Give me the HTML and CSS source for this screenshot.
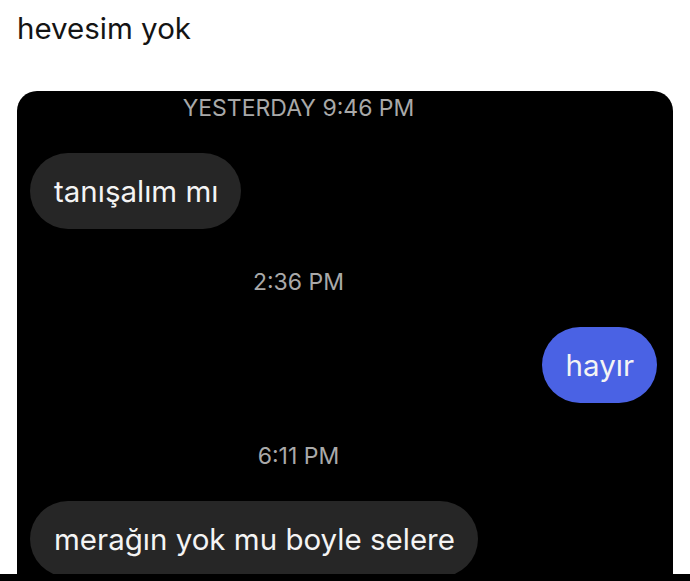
FILE: index.html
```html
<!DOCTYPE html>
<html lang="tr">
<head>
<meta charset="utf-8">
<title>hevesim yok</title>
<link rel="stylesheet" href="styles.css">
</head>
<body>
<div class="page">
  <h1 class="title">hevesim yok</h1>
  <div class="card">
    <div class="stamp">YESTERDAY 9:46 PM</div>
    <div class="row row-in first"><div class="bubble in">tanışalım mı</div></div>
    <div class="stamp">2:36 PM</div>
    <div class="row row-out"><div class="bubble out">hayır</div></div>
    <div class="stamp">6:11 PM</div>
    <div class="row row-in"><div class="bubble in">merağın yok mu boyle selere</div></div>
  </div>
  <div class="footer"></div>
</div>
</body>
</html>
```

FILE: styles.css
```css
html, body {
  margin: 0;
  padding: 0;
  background: #ffffff;
}
.page {
  width: 690px;
  height: 581px;
  overflow: hidden;
  display: flex;
  flex-direction: column;
  font-family: Inter, "Liberation Sans", sans-serif;
}
.title {
  margin: 0;
  padding: 11px 17px 0;
  height: 35px;
  font-size: 29.5px;
  line-height: 35px;
  font-weight: 400;
  color: #141414;
}
.card {
  margin: 45px 17px 0;
  flex: 1;
  background: #000;
  border-radius: 20px 20px 0 0;
  padding: 4px 16px 0 13px;
  display: flex;
  flex-direction: column;
  overflow: hidden;
}
.stamp {
  padding-right: 90px;
  text-align: center;
  font-size: 23px;
  line-height: 26px;
  color: #a9a9a9;
  margin-top: 40px;
}
.stamp:first-child {
  margin-top: 0;
}
.row {
  display: flex;
  margin-top: 32px;
}
.row-out {
  justify-content: flex-end;
}
.bubble {
  height: 76px;
  line-height: 76px;
  padding: 0 23px 0 24px;
  border-radius: 38px;
  font-size: 29.5px;
  color: #f4f4f4;
}
.bubble.in {
  background: #262626;
}
.bubble.out {
  background: #4a62e4;
}
.footer {
  height: 7px;
  background: #000;
}
```
